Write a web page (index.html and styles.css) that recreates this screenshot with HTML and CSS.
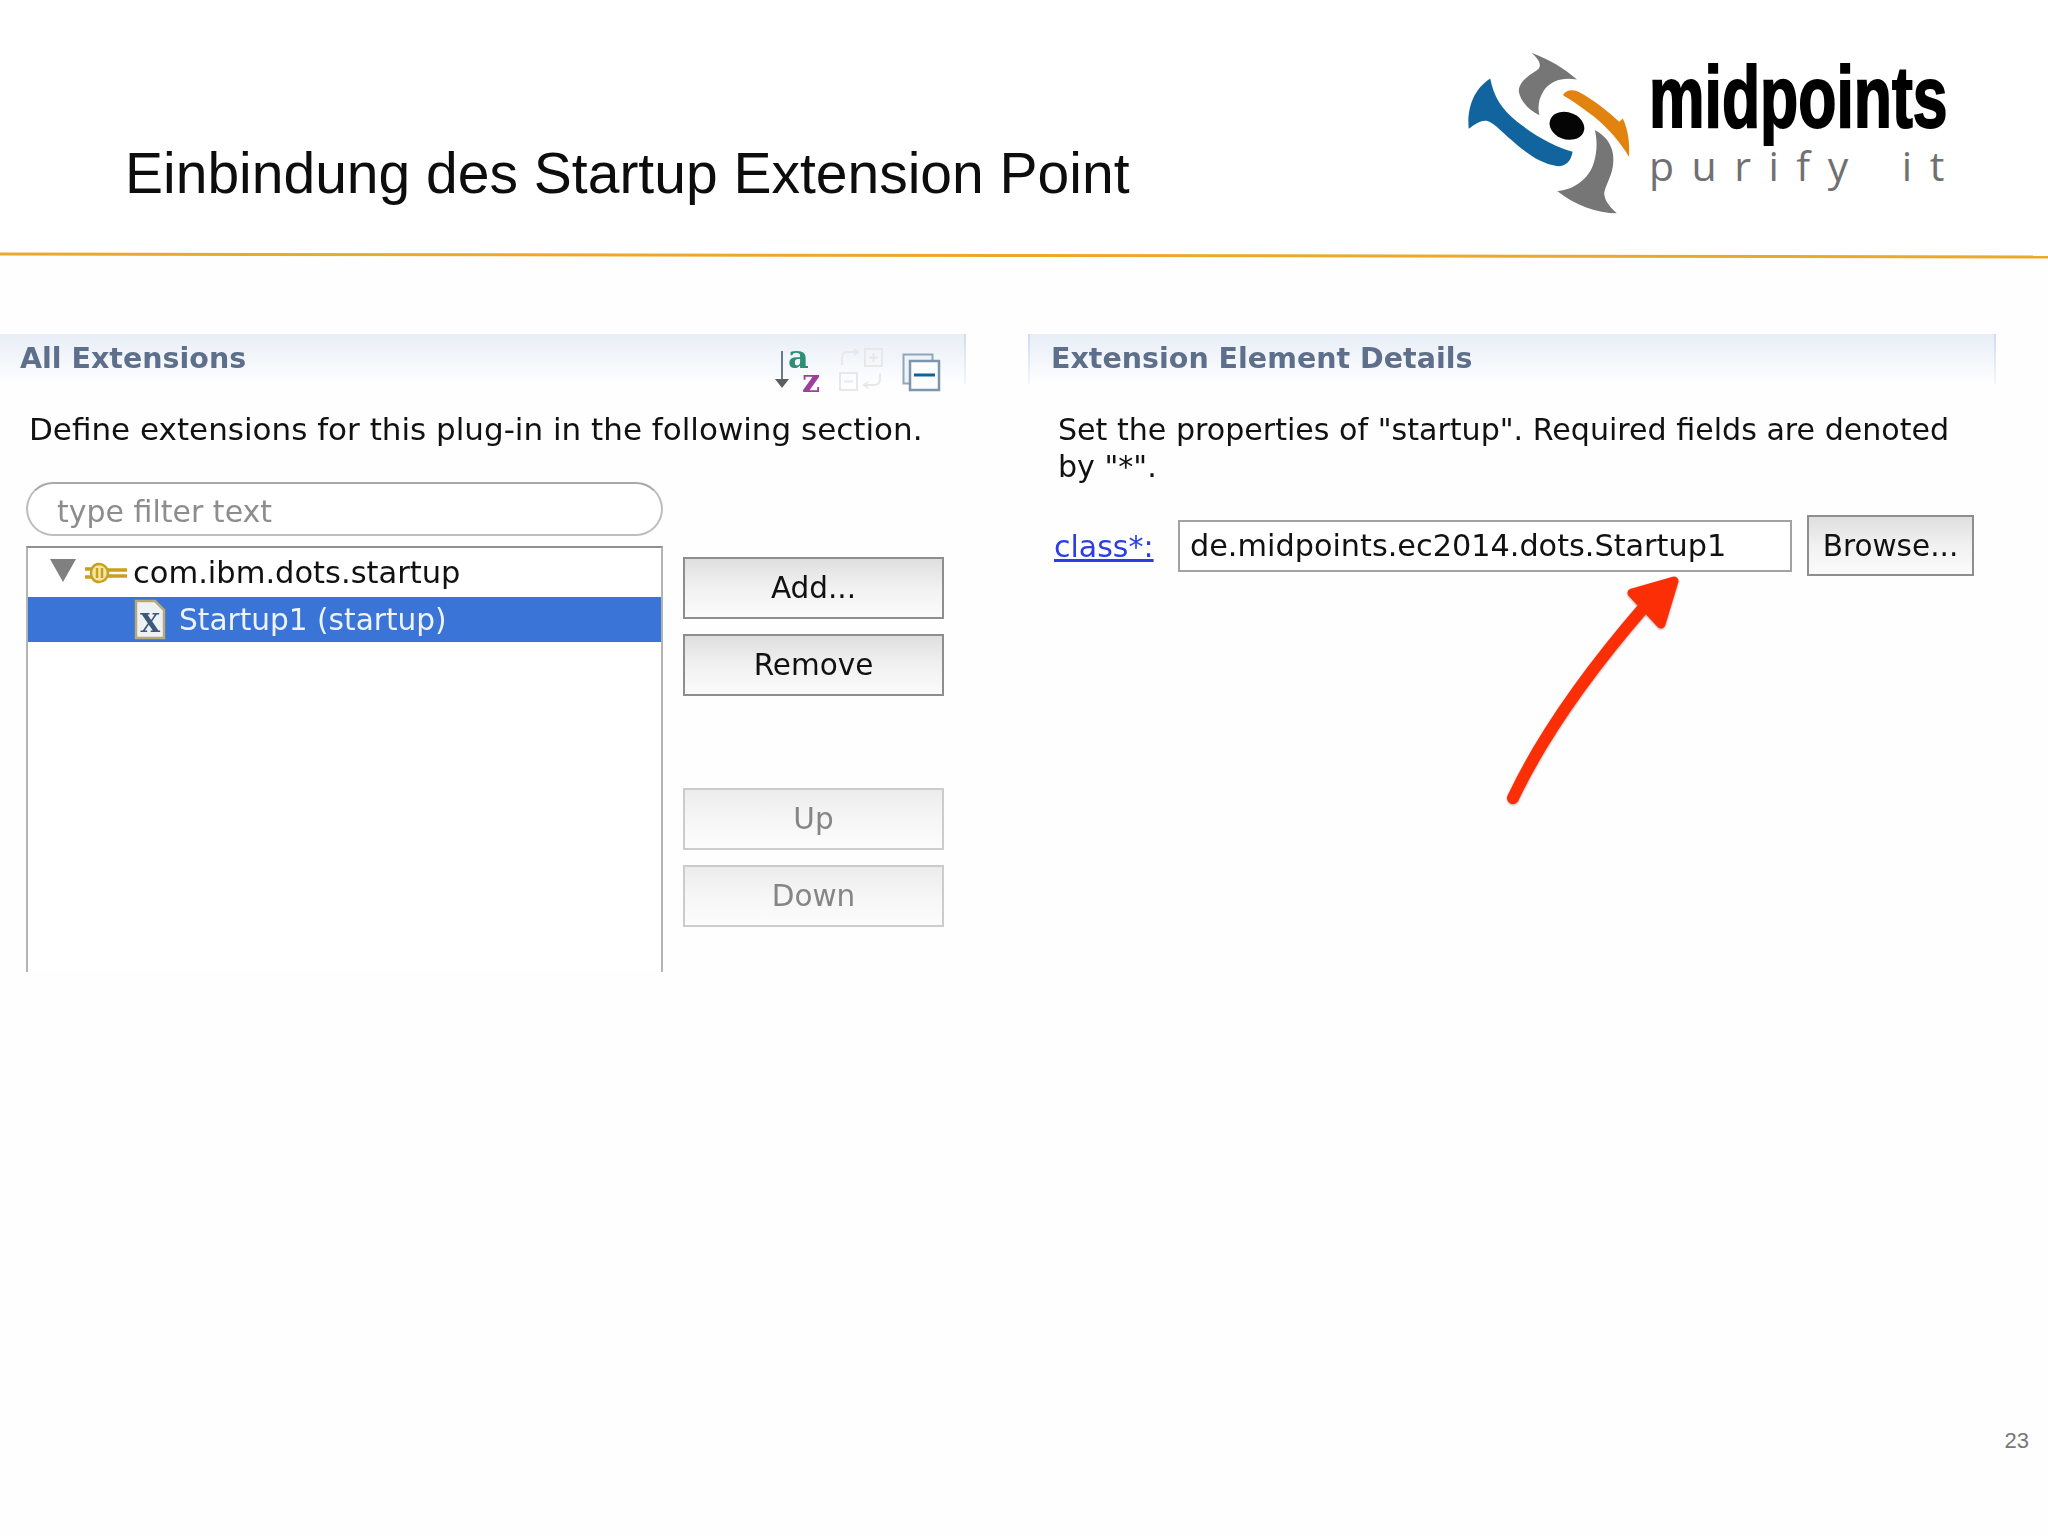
FILE: index.html
```html
<!DOCTYPE html>
<html lang="de">
<head>
<meta charset="utf-8">
<title>Einbindung des Startup Extension Point</title>
<link rel="stylesheet" href="styles.css">
</head>
<body>
<div class="slide">
  <header class="top">
    <h1 class="title">Einbindung des Startup Extension Point</h1>
    <div class="logo">
      <svg class="logo-mark" viewBox="78 65 452 487" preserveAspectRatio="none" aria-hidden="true">
        <path class="lm-blue" d="M140 145C150 200 170 235 215 275C270 320 320 350 370 365C365 395 350 410 325 408C280 400 240 370 200 330C175 310 155 280 130 272C110 270 95 285 80 296C75 240 90 180 140 145Z"/>
        <path class="lm-gray" d="M255 67C300 85 350 115 382 148C345 140 310 150 290 180C275 205 272 230 277 255C250 240 225 215 220 185C218 160 240 140 270 120C285 110 280 90 255 67Z"/>
        <path class="lm-orange" d="M343 195C350 180 370 175 390 187C430 210 470 245 500 275L510 265C525 300 530 340 527 380C505 340 470 295 430 260C400 235 375 215 343 195Z"/>
        <ellipse class="lm-black" cx="354" cy="287" rx="50" ry="40" transform="rotate(25 354 287)"/>
        <path class="lm-gray" d="M432 300C470 320 490 360 482 410C478 440 460 470 458 490C460 515 475 530 493 550C440 550 375 525 327 483C370 480 410 450 425 410C438 375 440 335 432 300Z"/>
      </svg>
      <div class="logo-text">
        <div class="logo-name">midpoints</div>
        <div class="logo-claim">purify it</div>
      </div>
    </div>
  </header>
  <div class="rule"></div>

  <main class="panels">
    <section class="panel">
      <div class="sec-head sec-head-left">
        <span class="sec-title">All Extensions</span>
        <div class="toolbar">
          <svg class="tool tool-sort" viewBox="0 0 48 46" aria-hidden="true">
            <path class="sort-arrow" d="M8 4V36"/>
            <path class="sort-tip" d="M1 32H15L8 41Z"/>
            <text class="sort-a" x="14" y="21">a</text>
            <text class="sort-z" x="28" y="45">z</text>
          </svg>
          <svg class="tool tool-expand" viewBox="0 0 46 44" aria-hidden="true">
            <rect class="dis" x="27" y="2" width="17" height="17"/>
            <rect class="dis" x="2" y="26" width="17" height="17"/>
            <path class="dis" d="M31 10.500H40M35.500 6V15M6 34.500H15M4 18V10C4 7 6 5 10 5H20M16 2L20 5L16 8M42 26V32C42 36 40 38 36 38H26M30 35L26 38L30 41"/>
          </svg>
          <svg class="tool tool-collapse" viewBox="0 0 38 38" aria-hidden="true">
            <rect class="col-back" x="1.500" y="1.500" width="29" height="29"/>
            <rect class="col-front" x="8" y="8" width="29" height="29"/>
            <path class="col-minus" d="M12 22H33"/>
          </svg>
        </div>
      </div>
      <p class="desc desc-left">Define extensions for this plug-in in the following section.</p>
      <div class="master">
        <div class="tree-col">
          <div class="filter">type filter text</div>
          <div class="tree">
            <div class="row">
              <span class="twisty"></span>
              <svg class="plug" viewBox="0 0 44 24" aria-hidden="true">
                <path class="plug-line" d="M1 8H9M1 16H9M23 9H43M23 15H43"/>
                <path class="plug-body" d="M15 3C20 3 24 7 24 12C24 17 20 21 15 21C10 21 7 17 7 12C7 7 10 3 15 3ZM13 7V17M18 7V17"/>
              </svg>
              <span class="row-text row-text-com">com.ibm.dots.startup</span>
            </div>
            <div class="row row-selected">
              <svg class="doc" viewBox="0 0 32 41" aria-hidden="true">
                <path class="doc-page" d="M2 2H21L30 11V39H2Z"/>
                <text class="doc-x" x="16" y="33">X</text>
              </svg>
              <span class="row-text">Startup1 (startup)</span>
            </div>
          </div>
        </div>
        <div class="btn-col">
          <button class="btn">Add...</button>
          <button class="btn">Remove</button>
          <button class="btn btn-off btn-up">Up</button>
          <button class="btn btn-off">Down</button>
        </div>
      </div>
    </section>

    <section class="panel">
      <div class="sec-head sec-head-right">
        <span class="sec-title">Extension Element Details</span>
      </div>
      <p class="desc desc-right">Set the properties of "startup". Required fields are denoted by "*".</p>
      <div class="field">
        <a class="field-link" href="#">class*:</a>
        <div class="field-input">de.midpoints.ec2014.dots.Startup1</div>
        <button class="btn btn-browse">Browse...</button>
      </div>
    </section>
  </main>

  <svg class="arrow" viewBox="0 0 190 245" aria-hidden="true">
    <path class="arrow-shaft" d="M13 232C40 175 80 115 145 40"/>
    <path class="arrow-head" d="M174 15L132 27L161 58Z"/>
  </svg>

  <footer class="foot">23</footer>
</div>
</body>
</html>
```
FILE: styles.css
```css
* { box-sizing: border-box; }
html, body { margin: 0; padding: 0; background: #fff; }
.slide {
  position: relative;
  width: 2048px;
  height: 1536px;
  display: flex;
  flex-direction: column;
  background: #fefefe;
  font-family: "DejaVu Sans", sans-serif;
  color: #111;
  overflow: hidden;
}
.top {
  height: 254px;
  display: flex;
  justify-content: space-between;
  padding: 52px 103px 0 125px;
  background: #fff;
}
.title {
  margin: 88px 0 0;
  font: 400 57px/66px "Liberation Sans", Arial, sans-serif;
  color: #0d0d0d;
}
.logo { display: flex; gap: 19px; height: 162px; }
.logo-mark { width: 162px; height: 162px; display: block; }
.lm-blue { fill: #12649f; }
.lm-gray { fill: #767677; }
.lm-orange { fill: #e2830f; }
.lm-black { fill: #050505; }
.logo-text { width: 296px; padding-top: 2px; }
.logo-name {
  font: 700 88px/86px "Liberation Sans", sans-serif;
  color: #000;
  -webkit-text-stroke: 2px #000;
  white-space: nowrap;
  transform: scaleX(0.71);
  transform-origin: left center;
}
.logo-claim {
  margin-top: 1px;
  font: 400 41px/48px "Open Sans", sans-serif;
  color: #707072;
  letter-spacing: 17.500px;
  white-space: pre;
  word-spacing: 8px;
}
.rule {
  height: 3px;
  width: 2060px;
  margin-left: -6px;
  background: #eca82b;
  transform: rotate(0.08deg);
}
.panels {
  display: grid;
  grid-template-columns: 966px 968px;
  column-gap: 62px;
  margin-top: 77px;
  filter: blur(0.7px);
}
.sec-head {
  height: 50px;
  display: flex;
  align-items: flex-start;
  justify-content: space-between;
  background: linear-gradient(#e8eef7, #fefefe);
  position: relative;
}
.sec-head-left {
  padding: 8px 24px 0 20px;
  border-right: 2px solid;
  border-image: linear-gradient(#cfdcec, #f4f7fb) 1;
}
.sec-head-right {
  padding: 8px 0 0 21px;
  border-left: 2px solid;
  border-right: 2px solid;
  border-image: linear-gradient(#cfdcec, #f4f7fb) 1;
}
.sec-title {
  font-size: 28.500px;
  line-height: 34px;
  font-weight: 700;
  color: #5d6f8b;
}
.toolbar { display: flex; align-items: flex-start; gap: 18px; padding-top: 3px; }
.tool { display: block; overflow: visible; }
.tool-sort { width: 48px; height: 46px; margin-top: 2px; margin-right: -2px; }
.tool-expand { width: 46px; height: 44px; margin-top: 2px; }
.tool-collapse { width: 38px; height: 38px; margin-top: 8px; }
.sort-arrow { stroke: #6a7a8a; stroke-width: 2; fill: none; }
.sort-tip { fill: #5d5d5d; }
.sort-a { font: 700 32px "DejaVu Serif", serif; fill: #2f8f76; }
.sort-z { font: 700 32px "DejaVu Serif", serif; fill: #9c3f9f; }
.dis { fill: none; stroke: #e6e8ea; stroke-width: 2; }
.col-back { fill: #eef3f8; stroke: #8fa6bd; stroke-width: 2; }
.col-front { fill: #fbfdff; stroke: #7d95ad; stroke-width: 2.500; }
.col-minus { stroke: #13619c; stroke-width: 3; fill: none; }
.desc {
  margin: 0;
  font-size: 31px;
  line-height: 37px;
  color: #111;
}
.desc-left { padding: 27px 0 34px 29px; white-space: nowrap; }
.desc-right { padding: 27px 30px 30px 30px; font-size: 30.100px; }
.master { display: flex; gap: 20px; padding-left: 26px; }
.tree-col { width: 637px; display: flex; flex-direction: column; gap: 10px; }
.filter {
  height: 54px;
  border: 2px solid #bdbdbd;
  border-top-color: #a8a8a8;
  border-radius: 27px;
  padding-left: 29px;
  font-size: 30px;
  line-height: 55px;
  color: #8d8d8d;
  background: #fff;
}
.tree {
  height: 426px;
  border: 2px solid #b4b4b4;
  border-top-color: #8f8f8f;
  border-bottom: 0;
  background: #fff;
}
.row {
  height: 49px;
  display: flex;
  align-items: center;
  padding-left: 22px;
  font-size: 29.600px;
}
.row-text-com { font-size: 30.500px; }
.twisty {
  width: 0;
  height: 0;
  margin: -4px 8px 0 0;
  border-left: 13px solid transparent;
  border-right: 13px solid transparent;
  border-top: 23px solid #808080;
}
.plug { width: 44px; height: 24px; margin-right: 5px; flex: none; }
.plug-line { fill: none; stroke: #c9a01c; stroke-width: 3.500; }
.plug-body { fill: #f4e7a8; stroke: #c9a01c; stroke-width: 2.500; }
.row-selected {
  height: 45px;
  padding-left: 106px;
  background: #3974d6;
  color: #eef3fb;
  gap: 13px;
  margin-right: 0;
}
.doc { width: 32px; height: 41px; flex: none; }
.doc-page { fill: #eef2f5; stroke: #b9a878; stroke-width: 2.500; }
.doc-x { font: 700 26px "DejaVu Serif", serif; fill: #3c5a78; text-anchor: middle; }
.btn-col { width: 261px; padding-top: 75px; display: flex; flex-direction: column; gap: 15px; }
.btn {
  height: 62px;
  padding: 2px 0 0;
  border: 2px solid #8e8e8e;
  border-radius: 0;
  background: linear-gradient(#dfdfdf, #f1f1f1 50%, #fbfbfb);
  font: 400 29.500px/1 "DejaVu Sans", sans-serif;
  color: #111;
}
.btn-off {
  border-color: #cccccc;
  background: linear-gradient(#ececec, #f6f6f6 50%, #fcfcfc);
  color: #868686;
}
.btn-up { margin-top: 77px; }
.field { display: flex; align-items: center; padding-left: 26px; }
.field-link {
  width: 124px;
  padding-top: 2px;
  font-size: 30px;
  color: #2a3ee8;
  text-decoration: underline;
}
.field-input {
  width: 614px;
  height: 52px;
  border: 2px solid #a2a2a2;
  padding-left: 10px;
  font-size: 30.300px;
  line-height: 48px;
  background: #fff;
  white-space: nowrap;
}
.btn-browse { width: 167px; height: 61px; margin-left: 15px; }
.arrow {
  position: absolute;
  left: 1500px;
  top: 566px;
  width: 190px;
  height: 245px;
  overflow: visible;
  filter: drop-shadow(0 1px 1px rgba(0,0,0,.35));
}
.arrow-shaft { fill: none; stroke: #fb2e05; stroke-width: 12; stroke-linecap: round; }
.arrow-head { fill: #fb2e05; stroke: #fb2e05; stroke-width: 9; stroke-linejoin: round; }
.foot {
  margin-top: auto;
  padding: 0 19px 82px 0;
  text-align: right;
  font: 400 22px/26px "Liberation Sans", Arial, sans-serif;
  color: #777;
}
```
